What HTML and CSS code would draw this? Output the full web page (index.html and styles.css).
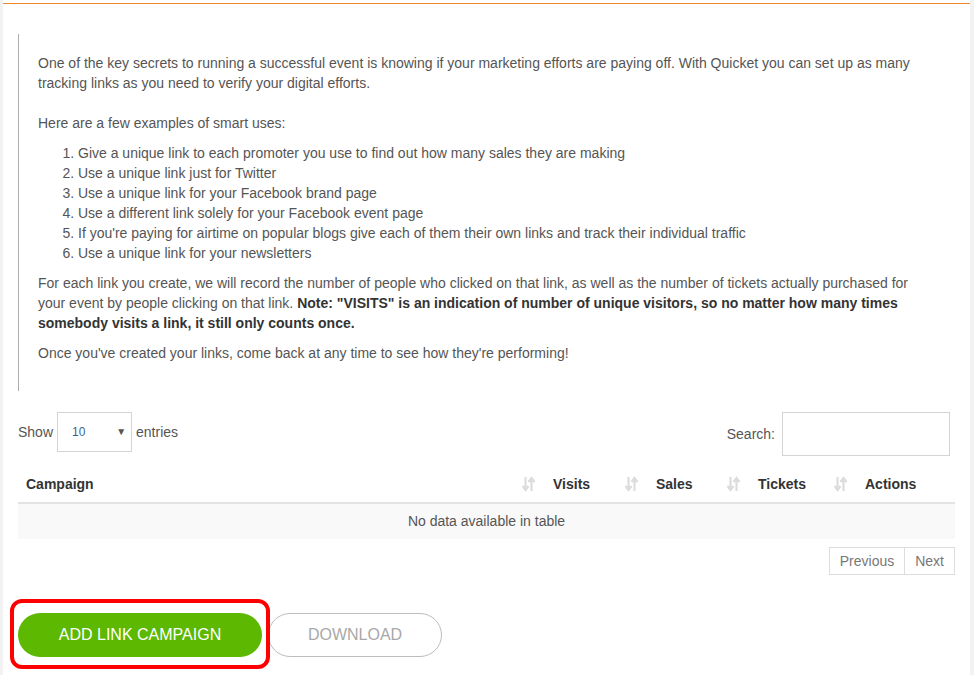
FILE: index.html
```html
<!DOCTYPE html>
<html lang="en">
<head>
<meta charset="utf-8">
<title>Link Campaigns</title>
<link rel="stylesheet" href="styles.css">
</head>
<body>
<div class="page">
  <div class="topline"></div>
  <div class="content">
    <blockquote class="intro">
      <p class="p-first">One of the key secrets to running a successful event is knowing if your marketing efforts are paying off. With Quicket you can set up as many tracking links as you need to verify your digital efforts.</p>
      <p>Here are a few examples of smart uses:</p>
      <ol class="uses">
        <li>Give a unique link to each promoter you use to find out how many sales they are making</li>
        <li>Use a unique link just for Twitter</li>
        <li>Use a unique link for your Facebook brand page</li>
        <li>Use a different link solely for your Facebook event page</li>
        <li>If you're paying for airtime on popular blogs give each of them their own links and track their individual traffic</li>
        <li>Use a unique link for your newsletters</li>
      </ol>
      <p>For each link you create, we will record the number of people who clicked on that link, as well as the number of tickets actually purchased for your event by people clicking on that link. <strong>Note: "VISITS" is an indication of number of unique visitors, so no matter how many times somebody visits a link, it still only counts once.</strong></p>
      <p>Once you've created your links, come back at any time to see how they're performing!</p>
    </blockquote>

    <div class="controls">
      <label class="length">Show
        <span class="select-wrap">
          <select class="select"><option>10</option><option>25</option><option>50</option></select>
          <span class="select-arrow">&#9660;</span>
        </span>
        entries</label>
      <label class="search">Search: <input class="search-input" type="search"></label>
    </div>

    <table class="grid">
      <colgroup>
        <col class="c1"><col class="c2"><col class="c3"><col class="c4"><col class="c5">
      </colgroup>
      <thead>
        <tr>
          <th class="sortable"><span>Campaign</span>
            <svg class="sort" width="13" height="16" viewBox="0 0 13 16"><path d="M3.5 1v12M0.5 10l3 4 3-4" fill="none" stroke="#dcdcdc" stroke-width="2.2"/><path d="M9.5 15V3M6.5 6l3-4 3 4" fill="none" stroke="#dcdcdc" stroke-width="2.2"/></svg>
          </th>
          <th class="sortable"><span>Visits</span>
            <svg class="sort" width="13" height="16" viewBox="0 0 13 16"><path d="M3.5 1v12M0.5 10l3 4 3-4" fill="none" stroke="#dcdcdc" stroke-width="2.2"/><path d="M9.5 15V3M6.5 6l3-4 3 4" fill="none" stroke="#dcdcdc" stroke-width="2.2"/></svg>
          </th>
          <th class="sortable"><span>Sales</span>
            <svg class="sort" width="13" height="16" viewBox="0 0 13 16"><path d="M3.5 1v12M0.5 10l3 4 3-4" fill="none" stroke="#dcdcdc" stroke-width="2.2"/><path d="M9.5 15V3M6.5 6l3-4 3 4" fill="none" stroke="#dcdcdc" stroke-width="2.2"/></svg>
          </th>
          <th class="sortable"><span>Tickets</span>
            <svg class="sort" width="13" height="16" viewBox="0 0 13 16"><path d="M3.5 1v12M0.5 10l3 4 3-4" fill="none" stroke="#dcdcdc" stroke-width="2.2"/><path d="M9.5 15V3M6.5 6l3-4 3 4" fill="none" stroke="#dcdcdc" stroke-width="2.2"/></svg>
          </th>
          <th><span>Actions</span></th>
        </tr>
      </thead>
      <tbody>
        <tr><td class="empty" colspan="5">No data available in table</td></tr>
      </tbody>
    </table>

    <div class="pager">
      <a class="pg">Previous</a><a class="pg pg-next">Next</a>
    </div>

    <div class="actions">
      <div class="highlight"></div>
      <button class="btn btn-add">ADD LINK CAMPAIGN</button>
      <button class="btn btn-download">DOWNLOAD</button>
    </div>
  </div>
</div>
</body>
</html>
```

FILE: styles.css
```css
* { box-sizing: border-box; }
html, body { margin: 0; padding: 0; }
body {
  background: #f2f2f2;
  font-family: "Liberation Sans", Arial, sans-serif;
  font-size: 14px;
  line-height: 20px;
  color: #555;
}
.page {
  margin: 0 4px 0 3px;
  background: #fff;
  min-height: 675px;
  padding-top: 3px;
}
.topline {
  height: 1px;
  background: #f0882e;
}
.content {
  padding: 0 15px 0 15px;
}
.intro {
  margin: 30px 20px 0 0;
  border-left: 1px solid #adadad;
  padding: 19px 0 28px 19px;
}
.intro p { margin: 0 0 10px 0; }
.intro p:last-child { margin-bottom: 0; }
.intro .p-first { margin-bottom: 20px; }
.intro strong { color: #333; }
.uses {
  margin: 0 0 10px 0;
  padding-left: 40px;
}
.controls {
  display: flex;
  justify-content: space-between;
  align-items: center;
  margin-top: 21px;
  padding-right: 5px;
}
.length {
  display: flex;
  align-items: center;
  gap: 4px;
  margin-top: -5px;
}
.select-wrap {
  position: relative;
  display: inline-block;
}
.select {
  appearance: none;
  -webkit-appearance: none;
  width: 75px;
  height: 40px;
  border: 1px solid #d4d4d4;
  background: #fff;
  padding: 0 0 0 14px;
  font-family: "Liberation Sans", Arial, sans-serif;
  font-size: 12px;
  color: #3d6388;
  border-radius: 0;
}
.select-arrow {
  position: absolute;
  right: 6px;
  top: 15px;
  font-size: 10px;
  line-height: 10px;
  color: #555;
  pointer-events: none;
}
.search {
  display: flex;
  align-items: center;
  gap: 7px;
}
.search-input {
  width: 168px;
  height: 44px;
  border: 1px solid #d4d4d4;
  padding: 0 8px;
  font-size: 14px;
}
.grid {
  width: 100%;
  border-collapse: collapse;
  table-layout: fixed;
  margin-top: 8px;
}
.c1 { width: 527px; }
.c2 { width: 103px; }
.c3 { width: 102px; }
.c4 { width: 107px; }
.c5 { width: 98px; }
.grid th {
  text-align: left;
  font-weight: bold;
  color: #333;
  padding: 10px 8px 8px 8px;
  border-bottom: 2px solid #e3e3e3;
  position: relative;
}
.grid th .sort {
  position: absolute;
  right: 10px;
  top: 12px;
}
.grid td.empty {
  background: #f9f9f9;
  text-align: center;
  padding: 7px 8px 8px 8px;
  color: #555;
}
.pager {
  display: flex;
  justify-content: flex-end;
  margin-top: 8px;
}
.pg {
  display: block;
  border: 1px solid #ddd;
  padding: 3px 10px;
  color: #777;
  line-height: 20px;
  background: #fff;
}
.pg-next { border-left: 0; }
.actions {
  position: relative;
  display: flex;
  gap: 6px;
  margin-top: 38px;
}
.btn {
  height: 44px;
  border-radius: 22px;
  font-family: "Liberation Sans", Arial, sans-serif;
  font-size: 16px;
  text-transform: uppercase;
  cursor: pointer;
}
.btn-add {
  width: 244px;
  background: #5cb800;
  border: 0;
  color: #fff;
}
.btn-download {
  width: 174px;
  background: #fff;
  border: 1px solid #bdbdbd;
  color: #a8a8a8;
}
.highlight {
  position: absolute;
  left: -8px;
  top: -14px;
  width: 260px;
  height: 70px;
  border: 4px solid #f00;
  border-radius: 12px;
  pointer-events: none;
}
```
